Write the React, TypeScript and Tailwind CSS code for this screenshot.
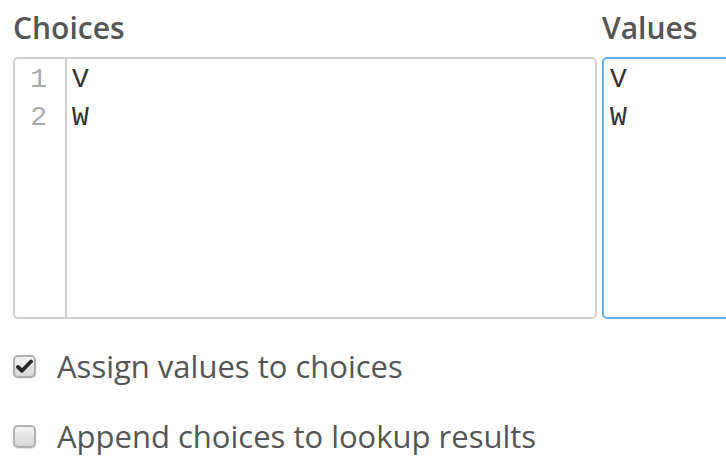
import React from 'react';

const lines = ['V', 'W'];

function Checkbox({ checked }: { checked: boolean }) {
  return (
    <span className="flex h-[23px] w-[23px] shrink-0 items-center justify-center rounded-[5px] border-2 border-[#b0b0b0] bg-gradient-to-b from-[#f4f4f4] to-[#d6d6d6] shadow-[0_1px_1px_rgba(0,0,0,0.12)]">
      {checked && (
        <svg width="17" height="15" viewBox="0 0 17 15">
          <path d="M2 8 L6 11.8 L15 2.5" fill="none" stroke="#262626" strokeWidth="3.8" strokeLinecap="round" strokeLinejoin="round" />
        </svg>
      )}
    </span>
  );
}

export default function App() {
  return (
    <div className="h-[471px] w-[726px] overflow-hidden bg-white pl-[13px] pt-[6px] text-[#555]" style={{ fontFamily: '"Open Sans", sans-serif' }}>
      <div className="flex gap-[5px]">
        <div className="w-[584px] shrink-0">
          <div className="mb-[7px] text-[30px] font-semibold leading-[44px]">Choices</div>
          <div className="flex h-[262px] overflow-hidden rounded-[5px] border-2 border-[#cfcfcf]">
            <div className="w-[52px] shrink-0 border-r-2 border-[#cfcfcf] pr-[18px] pt-[2px] text-right font-['Liberation_Mono',monospace] text-[28px] leading-[38px] text-[#aaa]">
              {lines.map((l, i) => (
                <div key={l}>{i + 1}</div>
              ))}
            </div>
            <div className="pl-[5px] pt-[2px] font-['Liberation_Mono',monospace] text-[28px] leading-[38px] text-[#333]">
              {lines.map((l) => (
                <div key={l}>{l}</div>
              ))}
            </div>
          </div>
        </div>
        <div className="w-[200px] shrink-0">
          <div className="mb-[7px] text-[30px] font-semibold leading-[44px]">Values</div>
          <div className="h-[262px] rounded-[5px] border-2 border-[#66afe9] pl-[6px] pt-[2px] font-['Liberation_Mono',monospace] text-[28px] leading-[38px] text-[#333]">
            {lines.map((l) => (
              <div key={l}>{l}</div>
            ))}
          </div>
        </div>
      </div>
      <div className="mt-[27px] flex flex-col gap-[29px]">
        <label className="flex items-center gap-[21px] text-[31px] leading-[41px]">
          <Checkbox checked />
          Assign values to choices
        </label>
        <label className="flex items-center gap-[21px] text-[31px] leading-[41px]">
          <Checkbox checked={false} />
          Append choices to lookup results
        </label>
      </div>
    </div>
  );
}
